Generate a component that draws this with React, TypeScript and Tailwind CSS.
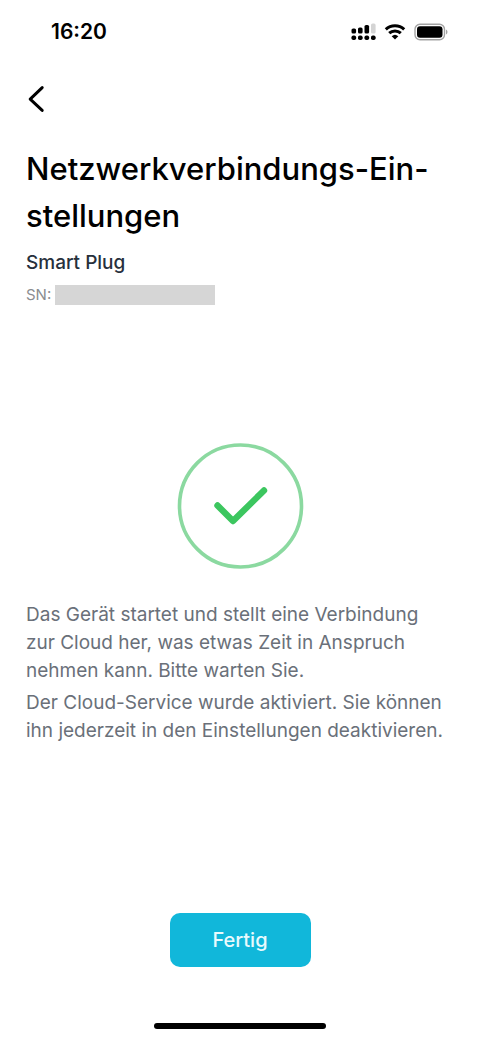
function StatusBar() {
  return (
    <header className="flex h-16 items-center justify-between pr-8 pl-[51px] text-black">
      <time className="text-[21px] leading-6 font-semibold">16:20</time>
      <div className="flex items-center gap-2">
        <svg className="h-5 w-[26px]" viewBox="0 0 26 20" aria-hidden="true">
          <rect x="1.5" y="6.5" width="4.6" height="5" rx="1.6" />
          <rect x="8" y="5.5" width="4.6" height="6" rx="1.6" />
          <rect x="14.5" y="3" width="4.6" height="8.5" rx="1.6" />
          <rect x="21" y="1.5" width="4.6" height="10" rx="1.6" fill="#d4d4d4" />
          <rect x="1.5" y="13.5" width="4.6" height="4.6" rx="1.8" />
          <rect x="8" y="13.5" width="4.6" height="4.6" rx="1.8" />
          <rect x="14.5" y="13.5" width="4.6" height="4.6" rx="1.8" />
          <rect x="21" y="13.5" width="4.6" height="4.6" rx="1.8" />
        </svg>
        <svg className="h-5 w-[22px]" viewBox="0 0 22 20" fill="none" stroke="currentColor" strokeWidth="3" aria-hidden="true">
          <path d="M1.8 7.4a13.2 13.2 0 0 1 18.4 0" />
          <path d="M5.2 11.2a8.4 8.4 0 0 1 11.6 0" />
          <path d="M11 17.6 7.7 14.2a4.8 4.8 0 0 1 6.6 0Z" fill="currentColor" stroke="none" />
        </svg>
        <svg className="h-5 w-[34px]" viewBox="0 0 34 20" aria-hidden="true">
          <rect x="1" y="2.3" width="29.5" height="15.4" rx="5" fill="none" stroke="#a3a3a3" strokeWidth="1.4" />
          <rect x="3" y="4.3" width="25.5" height="11.4" rx="3" />
          <path d="M32 7.5c2 1 2 4 0 5Z" fill="#a3a3a3" />
        </svg>
      </div>
    </header>
  );
}

export default function App() {
  return (
    <div className="flex min-h-screen flex-col bg-white font-['Inter','Liberation_Sans',sans-serif]">
      <StatusBar />
      <main className="flex flex-1 flex-col px-[26px]">
        <button type="button" aria-label="Zurück" className="mt-5 flex h-8 w-8 items-center text-black">
          <svg className="h-8 w-5" viewBox="0 0 20 32" fill="none" stroke="currentColor" strokeWidth="3" strokeLinecap="round" strokeLinejoin="round" aria-hidden="true">
            <path d="M16.2 3.6 4.2 15.2 16.2 26.4" />
          </svg>
        </button>
        <h1 className="mt-[29px] text-[31px] leading-[47px] font-medium whitespace-nowrap text-black">
          Netzwerkverbindungs-Ein-
          <br />
          stellungen
        </h1>
        <h2 className="mt-3 text-[19px] leading-6 font-medium text-[#27303c]">Smart Plug</h2>
        <div className="mt-2 flex items-center gap-1 text-[15px] leading-6 text-[#8b8d90]">
          <span>SN:</span>
          <span className="h-5 w-40 bg-[#d6d6d6]" />
        </div>
        <svg className="mt-[136px] size-32 self-center" viewBox="0 0 128 128" fill="none" aria-hidden="true">
          <circle cx="64.5" cy="63" r="61" stroke="#8bd9a0" strokeWidth="3.6" />
          <path d="M41.5 62.5 57 78 88 47.5" stroke="#3cc65f" strokeWidth="6.4" strokeLinecap="round" strokeLinejoin="round" />
        </svg>
        <div className="mt-[30px] flex flex-col gap-1 text-[19px] leading-7 whitespace-nowrap text-[#6a7079]">
          <p>
            Das Gerät startet und stellt eine Verbindung
            <br />
            zur Cloud her, was etwas Zeit in Anspruch
            <br />
            nehmen kann. Bitte warten Sie.
          </p>
          <p>
            Der Cloud-Service wurde aktiviert. Sie können
            <br />
            ihn jederzeit in den Einstellungen deaktivieren.
          </p>
        </div>
      </main>
      <footer className="flex flex-col items-center">
        <button type="button" className="flex h-[54px] w-[141px] items-center justify-center rounded-[10px] bg-[#11b7da] text-xl leading-6 font-medium text-[#e9fafd]">
          Fertig
        </button>
        <div className="mt-14 mb-[10px] h-[6px] w-[172px] rounded-full bg-black" />
      </footer>
    </div>
  );
}
